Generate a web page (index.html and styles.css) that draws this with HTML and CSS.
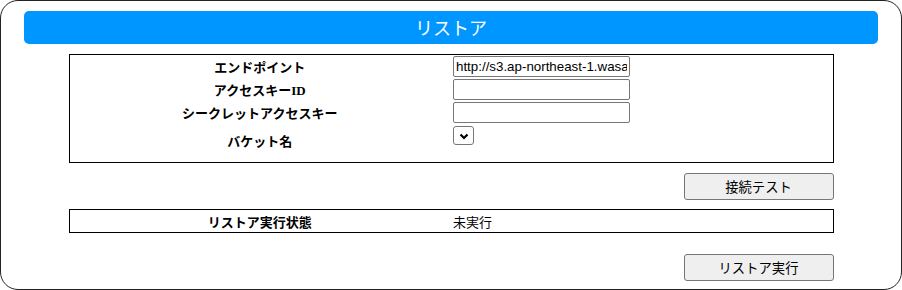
FILE: index.html
```html
<!DOCTYPE html>
<html lang="ja">
<head>
<meta charset="utf-8">
<title>リストア</title>
<link rel="stylesheet" href="styles.css">
</head>
<body>
<div class="panel">
  <div class="header">リストア</div>
  <div class="content">
    <table class="form-table">
      <tr>
        <th>エンドポイント</th>
        <td><input class="text" type="text" value="http://s3.ap-northeast-1.wasabisys.com"></td>
      </tr>
      <tr>
        <th>アクセスキーID</th>
        <td><input class="text" type="text"></td>
      </tr>
      <tr>
        <th>シークレットアクセスキー</th>
        <td><input class="text" type="password"></td>
      </tr>
      <tr class="bucket-row">
        <th>バケット名</th>
        <td class="sel-cell">
          <span class="sel-wrap">
            <select class="sel"></select>
            <svg class="chev" width="10" height="7" viewBox="0 0 10 7"><path d="M1.5 1.5 L5 5 L8.5 1.5" fill="none" stroke="#000" stroke-width="2.2"/></svg>
          </span>
        </td>
      </tr>
    </table>
    <div class="btn-row"><button class="btn">接続テスト</button></div>
    <table class="status-table">
      <tr>
        <th>リストア実行状態</th>
        <td>未実行</td>
      </tr>
    </table>
    <div class="btn-row btn-row-last"><button class="btn">リストア実行</button></div>
  </div>
</div>
</body>
</html>
```
FILE: styles.css
```css
html, body {
  margin: 0;
  padding: 0;
  background: #fff;
}
body {
  font-family: "Liberation Serif", "Noto Sans CJK JP", serif;
  font-size: 13px;
  color: #000;
}
.panel {
  box-sizing: border-box;
  width: 902px;
  height: 290px;
  border: 1px solid #222;
  border-radius: 18px;
  padding: 10px 23px 8px;
  display: flex;
  flex-direction: column;
}
.header {
  height: 33px;
  background: #0096ff;
  border-radius: 5px;
  color: #fff;
  font-family: "Noto Sans CJK JP", sans-serif;
  font-size: 18px;
  line-height: 33px;
  text-align: center;
}
.content {
  width: 765px;
  margin: 10px auto 0;
  display: flex;
  flex-direction: column;
}
table {
  width: 765px;
  border: 1px solid #000;
  border-collapse: separate;
  border-spacing: 0;
  table-layout: fixed;
}
th, td {
  padding: 1px;
  width: 50%;
}
th {
  font-weight: bold;
  text-align: center;
}
td {
  text-align: left;
  padding-left: 3px;
}
.form-table tr {
  height: 23px;
}
.form-table tr.bucket-row {
  height: 38px;
}
.bucket-row th {
  padding-bottom: 6px;
}
.sel-cell {
  vertical-align: top;
  padding-top: 2px;
}
.text {
  box-sizing: border-box;
  width: 177px;
  height: 21px;
  margin: 0;
  padding: 1px 2px;
  border: 1px solid #767676;
  border-radius: 2px;
  font-family: "Liberation Sans", sans-serif;
  font-size: 13.33px;
  color: #000;
}
.sel-wrap {
  position: relative;
  display: inline-block;
  width: 21px;
  height: 19px;
  vertical-align: top;
}
.sel {
  appearance: none;
  -webkit-appearance: none;
  box-sizing: border-box;
  width: 21px;
  height: 19px;
  margin: 0;
  padding: 0;
  border: 1px solid #767676;
  border-radius: 3px;
  background: #fff;
  display: block;
}
.chev {
  position: absolute;
  left: 6px;
  top: 7px;
  pointer-events: none;
}
.btn-row {
  display: flex;
  justify-content: flex-end;
  margin: 10px 0 9px;
}
.btn-row-last {
  margin: 21px 0 0;
}
.btn {
  box-sizing: border-box;
  width: 150px;
  height: 27px;
  margin: 0;
  padding: 0;
  background: #efefef;
  border: 1px solid #767676;
  border-radius: 3px;
  font-family: "Noto Sans CJK JP", sans-serif;
  font-size: 13.33px;
  color: #000;
}
.status-table tr {
  height: 22px;
}
```
